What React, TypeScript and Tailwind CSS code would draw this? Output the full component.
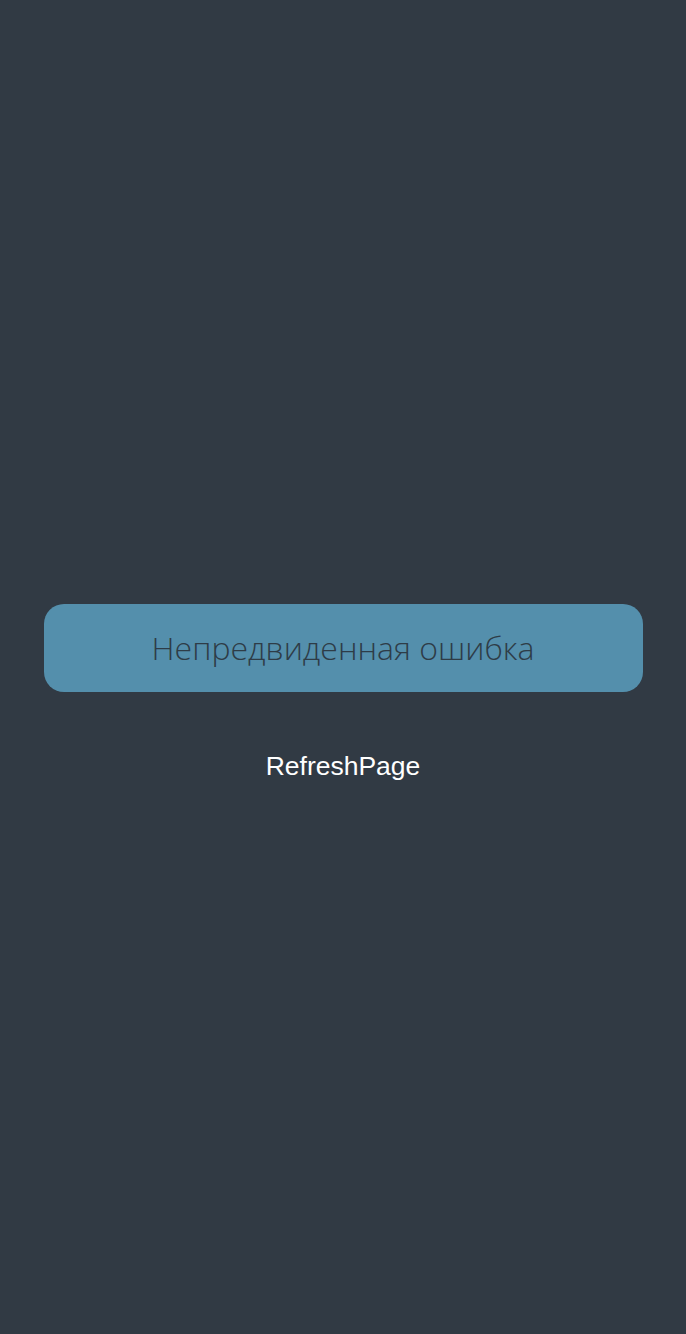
import React from 'react';

const App: React.FC = () => {
  return (
    <div className="min-h-screen w-full bg-[#313a44] flex flex-col items-center pt-[604px]">
      <div className="w-[599px] h-[88px] rounded-[20px] bg-[#548fac] flex items-center justify-center">
        <span className="font-['Open_Sans',sans-serif] font-light text-[32px] text-[#2e3c47]">
          Непредвиденная ошибка
        </span>
      </div>
      <button className="mt-[59px] font-['Liberation_Sans',Arial,sans-serif] text-[26.5px] leading-[30px] text-white">
        RefreshPage
      </button>
    </div>
  );
};

export default App;
